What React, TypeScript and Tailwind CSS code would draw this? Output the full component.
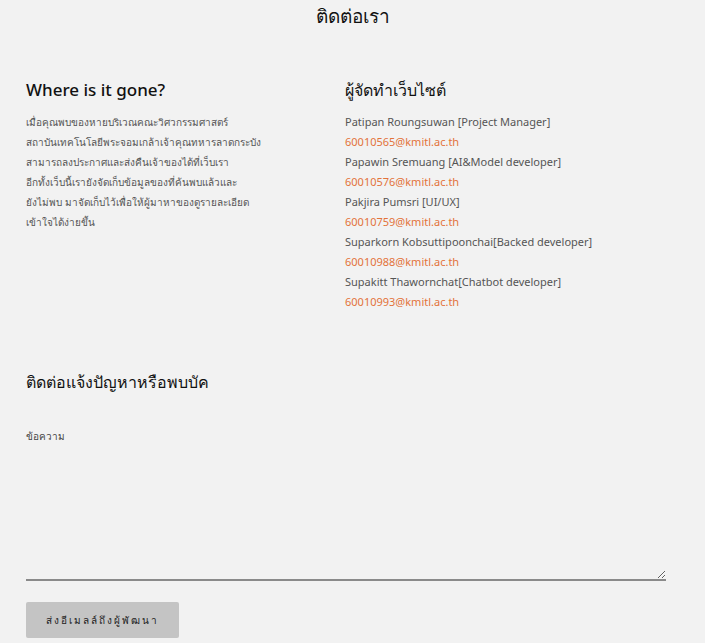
import React from "react";

const team = [
  { name: "Patipan Roungsuwan [Project Manager]", email: "60010565@kmitl.ac.th" },
  { name: "Papawin Sremuang [AI&Model developer]", email: "60010576@kmitl.ac.th" },
  { name: "Pakjira Pumsri [UI/UX]", email: "60010759@kmitl.ac.th" },
  { name: "Suparkorn Kobsuttipoonchai[Backed developer]", email: "60010988@kmitl.ac.th" },
  { name: "Supakitt Thawornchat[Chatbot developer]", email: "60010993@kmitl.ac.th" },
];

const about = [
  "เมื่อคุณพบของหายบริเวณคณะวิศวกรรมศาสตร์",
  "สถาบันเทคโนโลยีพระจอมเกล้าเจ้าคุณทหารลาดกระบัง",
  "สามารถลงประกาศและส่งคืนเจ้าของได้ที่เว็บเรา",
  "อีกทั้งเว็บนี้เรายังจัดเก็บข้อมูลของที่ค้นพบแล้วและ",
  "ยังไม่พบ มาจัดเก็บไว้เพื่อให้ผู้มาหาของดูรายละเอียด",
  "เข้าใจได้ง่ายขึ้น",
];

export default function App() {
  return (
    <div
      className="min-h-[643px] bg-[#f2f2f2] px-[26px] pb-[5px]"
      style={{ fontFamily: '"Noto Sans", "Liberation Sans", sans-serif' }}
    >
      <h1 className="pt-[2px] text-center text-[19px] leading-[28px] font-medium text-[#111]">
        ติดต่อเรา
      </h1>

      <div className="mt-[48px] flex">
        <div className="w-[319px]">
          <h2 className="text-[17px] leading-[24px] font-medium text-[#111]">
            Where is it gone?
          </h2>
          <div className="mt-[10px] text-[10px] leading-[20px] text-[#555]">
            {about.map((line) => (
              <p key={line}>{line}</p>
            ))}
          </div>
        </div>

        <div className="flex-1">
          <h2 className="text-[16px] leading-[24px] font-medium text-[#111]">
            ผู้จัดทำเว็บไซต์
          </h2>
          <div className="mt-[10px] text-[11px] leading-[20px]">
            {team.map((m) => (
              <div key={m.email}>
                <p className="text-[#555]">{m.name}</p>
                <p className="text-[#e3733a]">{m.email}</p>
              </div>
            ))}
          </div>
        </div>
      </div>

      <h2 className="mt-[58px] text-[16px] leading-[24px] font-medium text-[#111]">
        ติดต่อแจ้งปัญหาหรือพบบัค
      </h2>

      <label className="mt-[35px] block text-[10px] leading-[14px] text-[#444]">
        ข้อความ
      </label>
      <textarea className="mt-[2px] block h-[136px] w-[640px] resize-y border-0 border-b-2 border-[#8a8a8a] bg-transparent outline-none" />

      <button className="mt-[21px] h-[36px] w-[153px] rounded-[2px] bg-[#c4c4c4] text-[10px] tracking-[2px] text-[#222]">
        ส่งอีเมลล์ถึงผู้พัฒนา
      </button>
    </div>
  );
}
